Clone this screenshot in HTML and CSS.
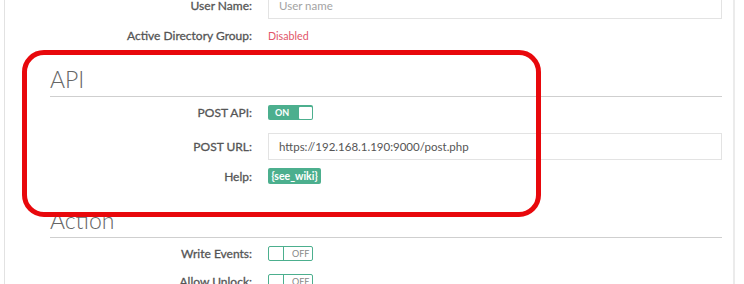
FILE: index.html
```html
<!DOCTYPE html>
<html>
<head>
<meta charset="utf-8">
<link rel="stylesheet" href="styles.css">
</head>
<body>
<div class="panel">
  <div class="form">
    <div class="row row-input first">
      <label class="lbl">User Name:</label>
      <div class="input placeholder">User name</div>
    </div>
    <div class="row row-text">
      <label class="lbl">Active Directory Group:</label>
      <span class="disabled">Disabled</span>
    </div>

    <h2 class="heading">API</h2>
    <div class="row row-toggle">
      <label class="lbl">POST API:</label>
      <div class="toggle on"><span class="toggle-label">ON</span><span class="knob"></span></div>
    </div>
    <div class="row row-input url">
      <label class="lbl">POST URL:</label>
      <div class="input">https://192.168.1.190:9000/post.php</div>
    </div>
    <div class="row row-badge">
      <label class="lbl">Help:</label>
      <span class="badge">{see_wiki}</span>
    </div>

    <h2 class="heading action">Action</h2>
    <div class="row row-toggle">
      <label class="lbl">Write Events:</label>
      <div class="toggle off"><span class="knob"></span><span class="toggle-label">OFF</span></div>
    </div>
    <div class="row row-toggle next">
      <label class="lbl">Allow Unlock:</label>
      <div class="toggle off"><span class="knob"></span><span class="toggle-label">OFF</span></div>
    </div>
  </div>
  <div class="highlight"></div>
</div>
</body>
</html>
```

FILE: styles.css
```css
html, body {
  margin: 0;
  padding: 0;
  background: #fff;
  overflow: hidden;
}
body {
  width: 744px;
  height: 284px;
  font-family: Lato, "Open Sans", "Liberation Sans", sans-serif;
  color: #555;
}
.panel {
  position: relative;
  display: flow-root;
  margin-left: 4px;
  width: 728px;
  height: 284px;
  overflow: hidden;
  border-left: 1px solid #e2e2e2;
  border-right: 2px solid #ebebeb;
}
.form {
  padding: 0 11px 0 45px;
  margin-top: -8px;
}
.row {
  display: grid;
  grid-template-columns: 202px 1fr;
  column-gap: 16px;
  align-items: center;
}
.lbl {
  text-align: right;
  font-size: 12px;
  font-weight: 400;
  color: #555;
  white-space: nowrap;
  -webkit-text-stroke: 0.3px #555;
}
.row-input { height: 27px; }
.row-text { height: 20px; margin-top: 6px; font-size: 12px; }
.input {
  height: 27px;
  box-sizing: border-box;
  border: 1px solid #e3e3e3;
  padding: 0 10px;
  font-size: 11.5px;
  line-height: 25px;
  color: #555;
}
.input.placeholder { color: #a3a3a3; }
.disabled { color: #e2566a; font-size: 10.7px; }

.heading {
  margin: 20px 0 0 0;
  font-size: 23px;
  font-weight: 300;
  color: #666;
  line-height: 28px;
  padding-bottom: 3px;
  border-bottom: 1px solid #cfcfcf;
}
.heading.action { margin-top: 22px; }

.row-toggle { height: 15px; margin-top: 8px; }
.row-toggle.next { margin-top: 13px; }
.row-input.url { margin-top: 13px; }
.row-badge { height: 16px; margin-top: 8px; }

.toggle {
  width: 45px;
  height: 15px;
  box-sizing: border-box;
  border-radius: 2px;
  display: flex;
  align-items: center;
  font-size: 9px;
  font-weight: 700;
}
.toggle.on {
  background: #4caf8e;
  padding: 1px;
  justify-content: space-between;
}
.toggle.on .toggle-label { color: #fff; padding-left: 6px; }
.toggle.on .knob {
  width: 13px;
  height: 12px;
  background: #fff;
  border-radius: 1px;
}
.toggle.off {
  border: 1.5px solid #4caf8e;
  background: #fff;
}
.toggle.off .knob {
  width: 14px;
  height: 100%;
  border-right: 1.5px solid #4caf8e;
}
.toggle.off .toggle-label { color: #888; font-weight: 400; padding-left: 8px; }

.badge {
  justify-self: start;
  width: 53px;
  height: 16px;
  line-height: 16px;
  text-align: center;
  background: #4caf8e;
  color: #fff;
  border-radius: 2px;
  font-size: 10.5px;
  font-weight: 700;
}
.highlight {
  position: absolute;
  left: 17px;
  top: 50px;
  width: 519px;
  height: 167px;
  box-sizing: border-box;
  border: 5px solid #e8080c;
  border-radius: 22px;
}
```
